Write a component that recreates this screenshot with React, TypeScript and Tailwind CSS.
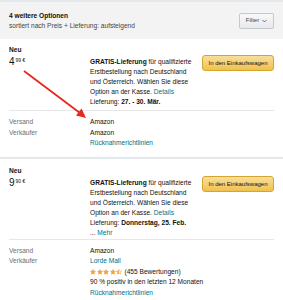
import React from 'react';

const Star = ({ half }: { half?: boolean }) => (
    <svg width="6" height="6" viewBox="0 0 24 24" className="shrink-0">
        <defs>
            <linearGradient id="halfstar">
                <stop offset="50%" stopColor="#ffa41c" />
                <stop offset="50%" stopColor="#ffffff" />
            </linearGradient>
        </defs>
        <path
            d="M12 2l2.9 6.6 7.1.6-5.4 4.7 1.6 7-6.2-3.7-6.2 3.7 1.6-7L2 9.2l7.1-.6z"
            fill={half ? 'url(#halfstar)' : '#ffa41c'}
            stroke="#de7921"
            strokeWidth="1.5"
        />
    </svg>
);

const Price = ({ whole, frac }: { whole: string; frac: string }) => (
    <div className="flex items-start text-[#0f1111] mt-[2px]">
        <span className="text-[10px] leading-[10px]">{whole}</span>
        <span className="text-[5px] leading-[6px] ml-[1px]">{frac} €</span>
    </div>
);

const CartButton = () => (
    <button className="mt-[10px] h-[16px] w-[72px] shrink-0 rounded-[3px] border border-[#d4a630] bg-gradient-to-b from-[#f8de9b] to-[#f0c14b] text-[6px] text-[#111] leading-none">
        In den Einkaufswagen
    </button>
);

const Row = ({ label, children }: { label?: string; children: React.ReactNode }) => (
    <div className="flex h-[10.5px] items-center whitespace-nowrap">
        <span className="w-[81px] shrink-0 text-[#6b6f6f]">{label}</span>
        <span>{children}</span>
    </div>
);

const Delivery = ({ date, more }: { date: string; more?: boolean }) => (
    <div className="w-[112px] shrink-0 pt-[12px] leading-[10px] whitespace-nowrap">
        <div>
            <span className="font-bold">GRATIS-Lieferung</span> für qualifizierte
        </div>
        <div>Erstbestellung nach Deutschland</div>
        <div>und Österreich. Wählen Sie diese</div>
        <div>
            Option an der Kasse. <span className="text-[#007185]">Details</span>
        </div>
        <div>
            Lieferung: <span className="font-bold">{date}</span>
        </div>
        {more && (
            <div>
                ... <span className="text-[#007185]">Mehr</span>
            </div>
        )}
    </div>
);

export default function App() {
    return (
        <div className="relative w-[283px] h-[300px] overflow-hidden bg-white text-[6.6px] text-[#0f1111]" style={{ fontFamily: '"Liberation Sans", Arial, sans-serif' }}>
            {/* Header */}
            <div className="h-[39px] border-t-2 border-[#e3e8ec] bg-[#f3f3f3] px-[9px] flex items-center justify-between">
                <div className="flex flex-col gap-[1px]">
                    <span className="font-bold leading-[9px]">4 weitere Optionen</span>
                    <span className="leading-[9px] text-[#444]">sortiert nach Preis + Lieferung: aufsteigend</span>
                </div>
                <button className="h-[16px] w-[35px] rounded-[2px] border border-[#c5c9cc] bg-gradient-to-b from-[#f7f8fa] to-[#e7e9ec] flex items-center justify-center gap-[3px] text-[6px] text-[#444]">
                    Filter
                    <svg width="5" height="4" viewBox="0 0 10 6">
                        <path d="M1 1l4 4 4-4" fill="none" stroke="#555" strokeWidth="1.6" />
                    </svg>
                </button>
            </div>

            {/* Offer 1 */}
            <div className="px-[9px] pt-[6px]">
                <div className="flex items-start">
                    <div className="w-[81px] shrink-0">
                        <div className="font-bold leading-[10px]">Neu</div>
                        <Price whole="4" frac="99" />
                    </div>
                    <Delivery date="27. - 30. Mär." />
                    <CartButton />
                </div>
                <div className="mt-[3px] border-t border-[#e7e7e7]" />
                <div className="pt-[6px] pb-[8px]">
                    <Row label="Versand">Amazon</Row>
                    <Row label="Verkäufer">Amazon</Row>
                    <Row>
                        <span className="text-[#007185]">Rücknahmerichtlinien</span>
                    </Row>
                </div>
            </div>

            <div className="h-[2px] bg-[#e3e8ec]" />

            {/* Offer 2 */}
            <div className="px-[9px] pt-[7px]">
                <div className="flex items-start">
                    <div className="w-[81px] shrink-0">
                        <div className="font-bold leading-[10px]">Neu</div>
                        <Price whole="9" frac="90" />
                    </div>
                    <Delivery date="Donnerstag, 25. Feb." more />
                    <CartButton />
                </div>
                <div className="mt-[1px] border-t border-[#e7e7e7]" />
                <div className="pt-[6px]">
                    <Row label="Versand">Amazon</Row>
                    <Row label="Verkäufer">
                        <span className="text-[#007185]">Lorde Mall</span>
                    </Row>
                    <Row>
                        <span className="flex items-center gap-[0.5px]">
                            <Star />
                            <Star />
                            <Star />
                            <Star />
                            <Star half />
                            <span className="ml-[2px]">(455 Bewertungen)</span>
                        </span>
                    </Row>
                    <Row>90 % positiv in den letzten 12 Monaten</Row>
                    <Row>
                        <span className="text-[#007185]">Rücknahmerichtlinien</span>
                    </Row>
                </div>
            </div>

            {/* Red annotation arrow */}
            <svg className="absolute left-0 top-0 pointer-events-none" width="283" height="300">
                <line x1="24" y1="71" x2="80" y2="113" stroke="#e8271e" strokeWidth="1.8" />
                <path d="M86 118 L76 115.5 L81.5 108.5 Z" fill="#e8271e" />
            </svg>
        </div>
    );
}
